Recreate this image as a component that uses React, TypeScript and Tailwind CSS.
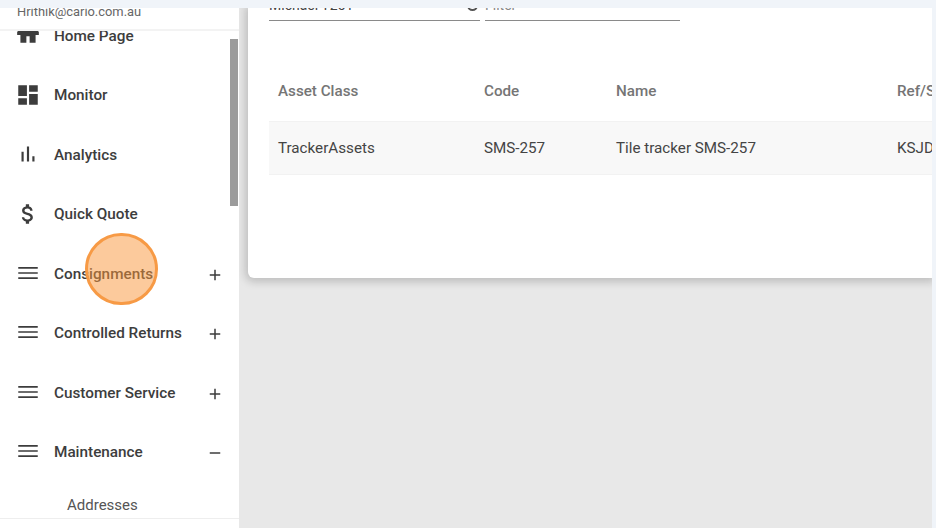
import React from "react";

const icons = {
  home: "M10.5 20v-6h3v6h5.5v-7h3v-3L12 3 2 10v3h3v7z",
  dashboard: "M3 13h8V3H3v10zm0 8h8v-6H3v6zm10 0h8V11h-8v10zm0-18v6h8V3h-8z",
  chart: "M6 10h2v9H6zM11 5h2v14h-2zm5 9h2v5h-2z",
  money:
    "M11.8 10.9c-2.27-.59-3-1.2-3-2.15 0-1.09 1.01-1.85 2.7-1.85 1.78 0 2.44.85 2.5 2.1h2.21c-.07-1.72-1.12-3.3-3.21-3.81V3h-3v2.16c-1.94.42-3.5 1.68-3.5 3.61 0 2.31 1.91 3.46 4.7 4.13 2.5.6 3 1.48 3 2.41 0 .69-.49 1.79-2.7 1.79-2.06 0-2.87-.92-2.98-2.1h-2.2c.12 2.19 1.76 3.42 3.68 3.83V21h3v-2.15c1.95-.37 3.5-1.5 3.5-3.55 0-2.84-2.43-3.81-4.7-4.4z",
  menu: "M3 17.5h18V16H3v1.5zm0-4.75h18v-1.5H3v1.5zM3 6.5V8h18V6.5H3z",
  plus: "M19 13h-6v6h-2v-6H5v-2h6V5h2v6h6v2z",
  minus: "M19 13H5v-2h14v2z",
};

function Icon({ d, size = 26 }: { d: string; size?: number }) {
  return (
    <svg width={size} height={size} viewBox="0 0 24 24" fill="currentColor">
      <path d={d} />
    </svg>
  );
}

const navItems = [
  { label: "Home Page", icon: icons.home, lift: "-mt-[4px]" },
  { label: "Monitor", icon: icons.dashboard, lift: "-mt-[1px]" },
  { label: "Analytics", icon: icons.chart, lift: "-mt-[2px]" },
  { label: "Quick Quote", icon: icons.money, lift: "-mt-[2px]" },
  { label: "Consignments", icon: icons.menu, toggle: icons.plus, lift: "-mt-[3px]" },
  { label: "Controlled Returns", icon: icons.menu, toggle: icons.plus, lift: "-mt-[3px]" },
  { label: "Customer Service", icon: icons.menu, toggle: icons.plus, lift: "-mt-[3px]" },
  { label: "Maintenance", icon: icons.menu, toggle: icons.minus, lift: "-mt-[3px]" },
];

function Sidebar() {
  return (
    <div className="relative w-[239px] h-full bg-white flex flex-col overflow-hidden">
      <div className="relative z-10 h-[23px] shrink-0 bg-white border-b-2 border-[#f3f3f3] pl-[17px] text-[12.9px] leading-[8px] text-[#666666]">
        Hrithik@cario.com.au
      </div>
      <div className="flex-1 overflow-hidden -mt-[24px]">
        {navItems.map((item) => (
          <div
            key={item.label}
            className="h-[59.6px] first:h-[58.6px] flex items-center pl-[15px] pr-[15px] text-[#3d3d3d]"
          >
            <span className={item.lift}>
              <Icon d={item.icon} />
            </span>
            <span className="ml-[13px] flex-1 text-[15.3px] font-medium">
              {item.label}
            </span>
            {item.toggle && (
              <span className="mt-[1px]">
                <Icon d={item.toggle} size={18} />
              </span>
            )}
          </div>
        ))}
        <div className="pl-[67px] pt-[11px] text-[15px] text-[#555555]">
          Addresses
        </div>
      </div>
      <div className="h-[10px] shrink-0 bg-white border-t border-[#eeeeee]" />
      <div className="absolute left-[230px] top-[31px] w-2 h-[167px] bg-[#9b9b9b]" />
    </div>
  );
}

const columns = [
  { title: "Asset Class", value: "TrackerAssets", width: "w-[206px]" },
  { title: "Code", value: "SMS-257", width: "w-[132px]" },
  { title: "Name", value: "Tile tracker SMS-257", width: "w-[281px]" },
  { title: "Ref/Serial", value: "KSJD2345", width: "w-[120px]" },
];

function AssetCard() {
  return (
    <div className="w-[684px] h-[270px] bg-white rounded-bl-md shadow-[0_1px_9px_3px_rgba(0,0,0,0.18)] overflow-hidden pl-[21px]">
      <div className="flex gap-[5px] -mt-[10px] text-[14px] leading-[14px]">
        <div className="relative w-[211px] h-[23px] border-b border-[#8a8a8a] text-[#444444]">
          Michael T251
          <span className="absolute right-[2px] top-[2px] w-[11px] h-[11px] rounded-full border-2 border-[#555555]" />
        </div>
        <div className="w-[195px] h-[23px] border-b border-[#8a8a8a] text-[#888888]">
          Filter
        </div>
      </div>
      <div className="flex h-[100px] items-end pb-[18px] whitespace-nowrap">
        {columns.map((col) => (
          <div
            key={col.title}
            className={`${col.width} shrink-0 pl-[9px] text-[15.2px] font-medium text-[#757575]`}
          >
            {col.title}
          </div>
        ))}
      </div>
      <div className="flex h-[54px] items-center bg-[#f8f8f8] border-y border-[#f2f2f2] whitespace-nowrap">
        {columns.map((col) => (
          <div
            key={col.title}
            className={`${col.width} shrink-0 pl-[9px] pt-[1px] text-[15.2px] text-[#444444]`}
          >
            {col.value}
          </div>
        ))}
      </div>
    </div>
  );
}

export default function App() {
  return (
    <div
      className="relative w-[936px] h-[528px] overflow-hidden bg-[#f0f4f9] flex flex-col"
      style={{ fontFamily: "Roboto, sans-serif" }}
    >
      <div className="h-2 shrink-0" />
      <div className="flex-1 min-h-0 w-[932px] flex">
        <Sidebar />
        <div className="flex-1 bg-[#e8e8e8] pl-[9px] overflow-hidden">
          <AssetCard />
        </div>
      </div>
      <div className="absolute left-[85px] top-[233px] w-[73px] h-[72px] rounded-full border-[3px] border-[#f79a45] bg-[#f9953a]/50" />
    </div>
  );
}
